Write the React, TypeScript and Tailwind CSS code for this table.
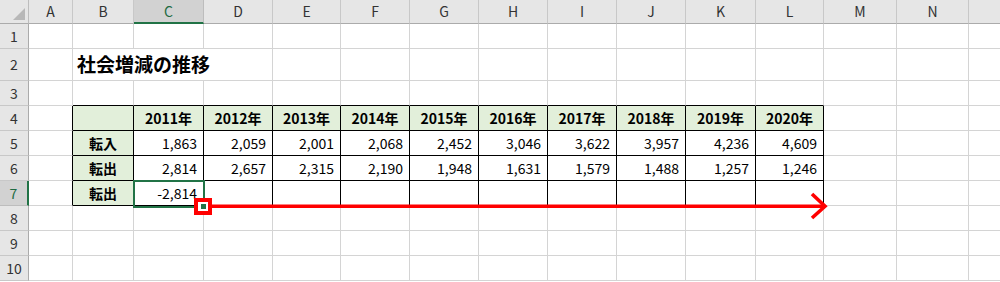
import React from 'react';

const cols = ['A', 'B', 'C', 'D', 'E', 'F', 'G', 'H', 'I', 'J', 'K', 'L', 'M', 'N', 'O'];
const rowNums = [1, 2, 3, 4, 5, 6, 7, 8, 9, 10];

const years = ['2011年', '2012年', '2013年', '2014年', '2015年', '2016年', '2017年', '2018年', '2019年', '2020年'];
const tenyu = ['1,863', '2,059', '2,001', '2,068', '2,452', '3,046', '3,622', '3,957', '4,236', '4,609'];
const tenshutsu = ['2,814', '2,657', '2,315', '2,190', '1,948', '1,631', '1,579', '1,488', '1,257', '1,246'];

const font = { fontFamily: '"Noto Sans CJK JP", "Noto Sans", sans-serif' };

// col index: 0 = A ... 14 = O
const inTable = (r: number, c: number) => r >= 4 && r <= 7 && c >= 1 && c <= 11;

function Cell({ r, c }: { r: number; c: number }) {
  const table = inTable(r, c);
  const rightBlack = table || (c === 0 && r >= 4 && r <= 7);
  const bottomBlack = table || (r === 3 && c >= 1 && c <= 11);
  const green = table && (r === 4 || c === 1);

  let content: React.ReactNode = null;
  let align = 'justify-end pr-[6px]';
  let weight = 'font-normal';
  if (r === 4 && c >= 2) {
    content = years[c - 2];
    align = 'justify-center';
    weight = 'font-bold';
  } else if (c === 1 && r >= 5 && r <= 7) {
    content = r === 5 ? '転入' : '転出';
    align = 'justify-center';
    weight = 'font-bold';
  } else if (r === 5 && c >= 2 && c <= 11) {
    content = tenyu[c - 2];
  } else if (r === 6 && c >= 2 && c <= 11) {
    content = tenshutsu[c - 2];
  } else if (r === 7 && c === 2) {
    content = '-2,814';
  }

  return (
    <div
      className={[
        'flex items-center text-[14px] text-black whitespace-nowrap overflow-hidden border-r border-b',
        rightBlack ? 'border-r-black' : 'border-r-[#d4d4d4]',
        bottomBlack ? 'border-b-black' : 'border-b-[#d4d4d4]',
        green ? 'bg-[#e2efda]' : 'bg-white',
        align,
        weight,
      ].join(' ')}
    >
      {content}
    </div>
  );
}

export default function App() {
  return (
    <div className="relative w-[1000px] h-[282px] bg-white overflow-hidden" style={font}>
      <div className="grid w-[1041px] grid-cols-[29px_44px_61px_70px_69px_68px_69px_69px_69px_69px_69px_70px_68px_73px_72px_72px] grid-rows-[24px_25px_32px_25px_25px_25px_25px_25px_25px_25px_25px]">
        {/* corner */}
        <div className="relative bg-[#e6e6e6] border-r border-b border-r-[#bdbdbd] border-b-[#ababab]">
          <svg className="absolute right-[3px] bottom-[3px]" width="12" height="12" viewBox="0 0 12 12">
            <polygon points="12,0 12,12 0,12" fill="#b8b8b8" />
          </svg>
        </div>
        {cols.map((l) => (
          <div
            key={l}
            className={
              l === 'C'
                ? 'flex items-center justify-center text-[14px] text-[#1e6b42] bg-[#d2d2d2] border-r border-b-2 border-r-[#bdbdbd] border-b-[#217346]'
                : 'flex items-center justify-center text-[14px] text-[#333] bg-[#e6e6e6] border-r border-b border-r-[#c8c8c8] border-b-[#ababab]'
            }
          >
            {/* column O sits past the window edge, its letter is not in view */}
            {l === 'O' ? null : l}
          </div>
        ))}

        {rowNums.map((r) => (
          <React.Fragment key={r}>
            <div
              className={
                r === 7
                  ? 'flex items-center justify-center text-[14px] text-[#1e6b42] bg-[#d2d2d2] border-r-2 border-b border-r-[#217346] border-b-[#bdbdbd]'
                  : 'flex items-center justify-center text-[14px] text-[#333] bg-[#e6e6e6] border-r border-b border-r-[#ababab] border-b-[#c8c8c8]'
              }
            >
              {r}
            </div>
            {r === 2 ? (
              <>
                <div className="bg-white border-r border-b border-r-[#d4d4d4] border-b-[#d4d4d4]" />
                <div className="col-span-3 flex items-center pl-[4px] text-[19px] font-bold text-black whitespace-nowrap bg-white border-r border-b border-r-[#d4d4d4] border-b-[#d4d4d4]">
                  社会増減の推移
                </div>
                {cols.slice(4).map((l, i) => (
                  <Cell key={l} r={r} c={i + 4} />
                ))}
              </>
            ) : (
              cols.map((l, c) => <Cell key={l} r={r} c={c} />)
            )}
          </React.Fragment>
        ))}
      </div>

      {/* active cell C7 */}
      <div className="absolute left-[133px] top-[180px] w-[72px] h-[28px] border-2 border-[#217346]" />

      {/* highlighted fill handle */}
      <div className="absolute left-[194px] top-[198px] w-[18px] h-[17px] border-[4px] border-[#ff0000] bg-white flex items-center justify-center">
        <div className="w-[5px] h-[5px] bg-[#217346]" />
      </div>

      {/* drag arrow */}
      <svg className="absolute left-[212px] top-[190px]" width="620" height="34" viewBox="0 0 620 34">
        <line x1="0" y1="16.3" x2="612" y2="16.3" stroke="#ff0000" strokeWidth="3.6" />
        <polyline points="600,4 613,16.3 600,28" fill="none" stroke="#ff0000" strokeWidth="3.6" />
      </svg>
    </div>
  );
}
